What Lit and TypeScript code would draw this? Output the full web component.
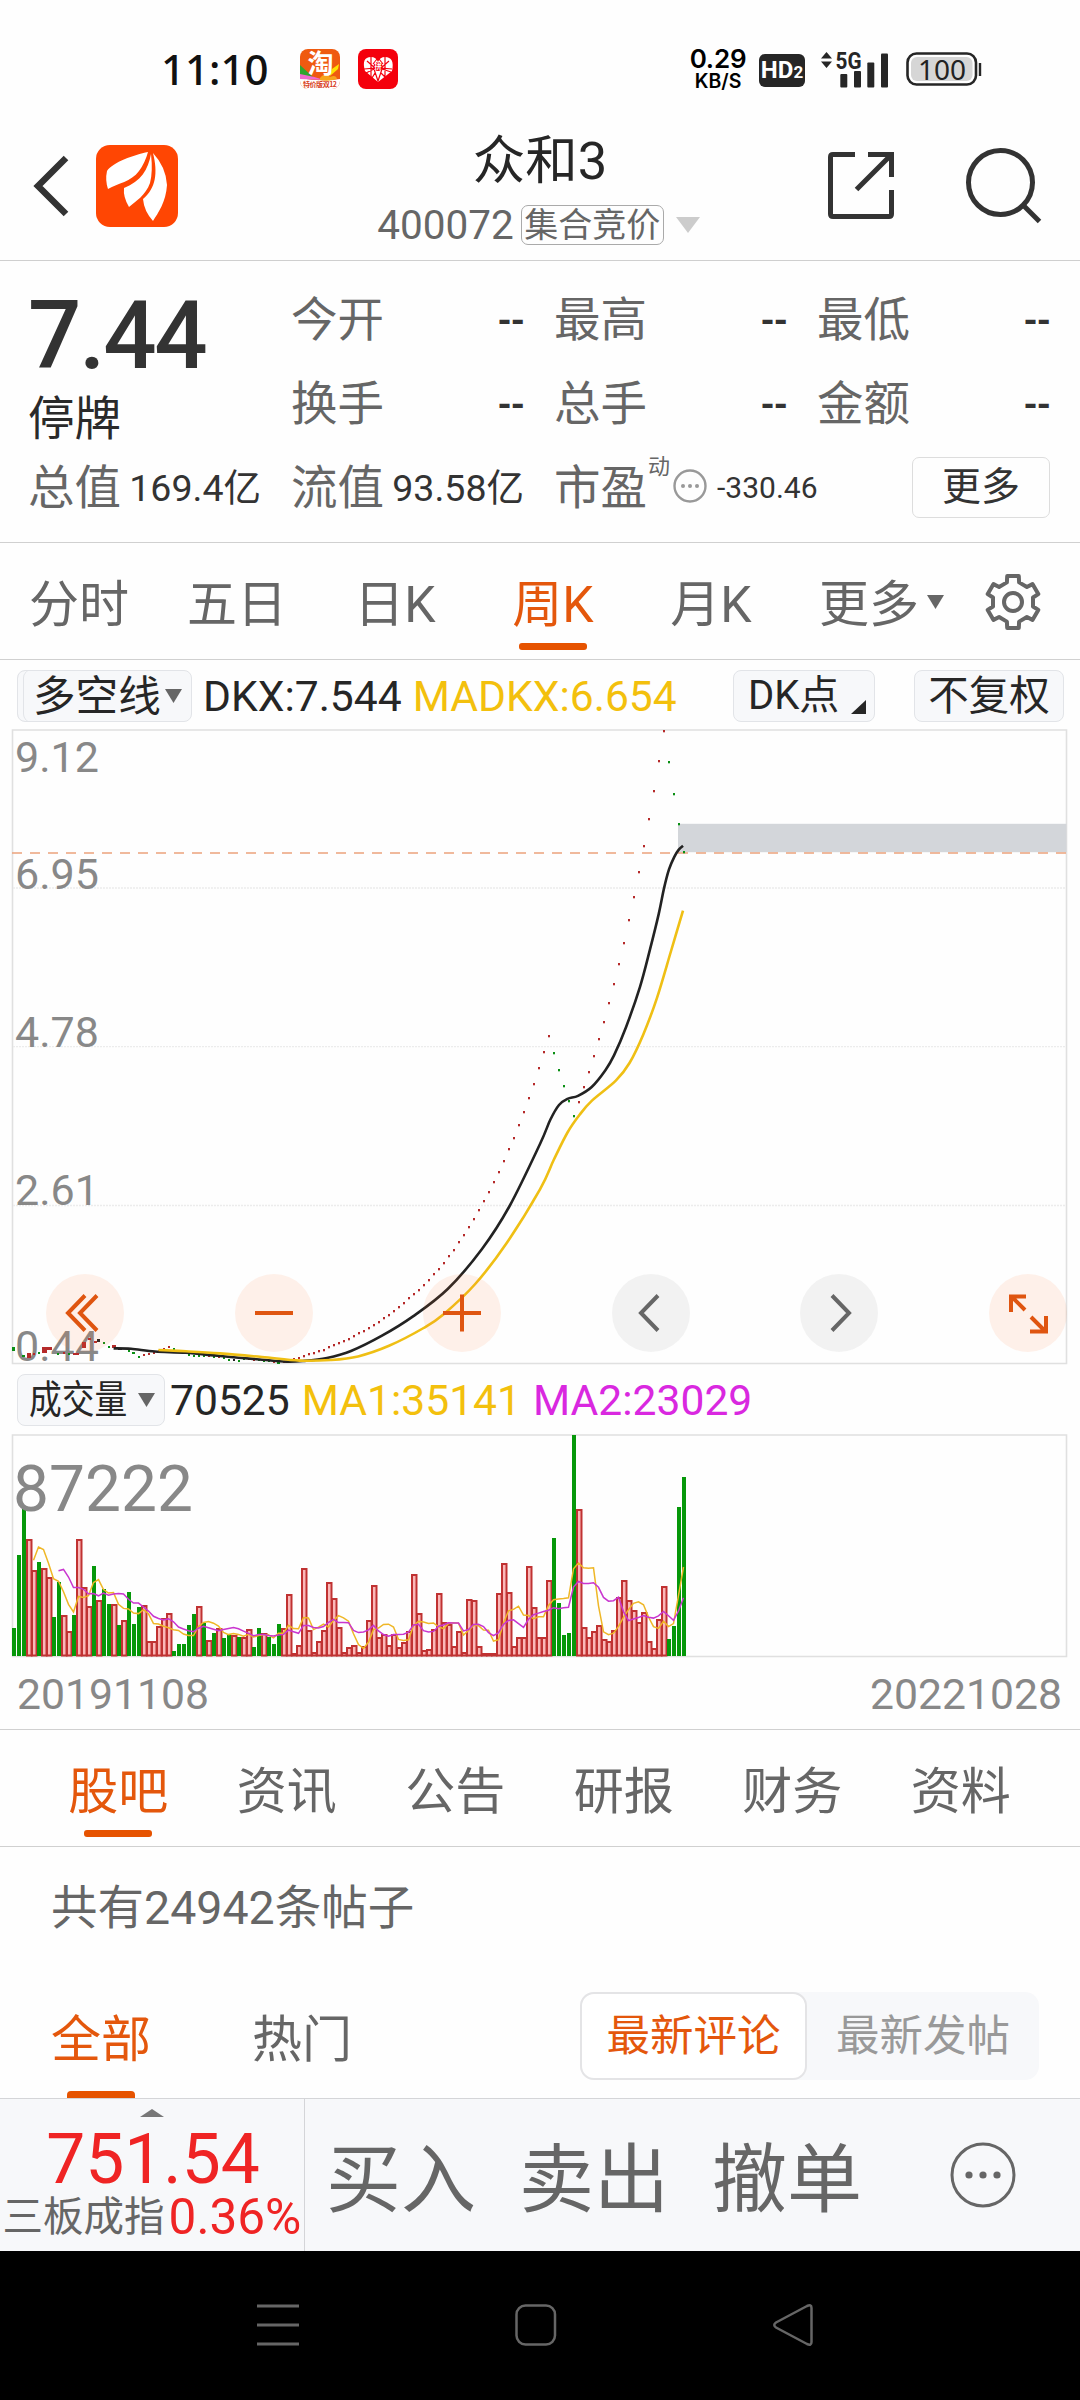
import { LitElement, html, svg, css } from "lit";
import { customElement } from "lit/decorators.js";

type Point = [number, number];

/* Weekly volume bars: "g" falling week, "r" rising week, height in px. */
const VOLUME = `g28 g101 g147 r117 r86 g94 r88 r79 g39 g74 r41 r25 g41 r117 r69 r50 g90 r56 g67 g52
r52 g31 r36 g64 g32 g49 r51 r15 r15 r30 r38 r43 g5 g12 g12 g31 g42 r50 g33 r16
g23 r28 g18 g22 r21 g19 r19 r27 g9 g28 r23 g19 g12 g32 r28 r62 r3 r11 r88 r26
r4 r15 r26 r74 r58 r29 r4 r9 r11 r4 r10 r36 r71 r19 r22 r11 r22 r9 r14 r25
r82 r43 r6 r7 r27 r63 r34 r32 r10 r25 r4 r57 r56 r10 r3 r3 r3 r63 r93 r64
r10 r19 r19 r90 r49 r19 r19 r76 g118 g53 g21 g23 g221 r147 r29 r19 r25 r31 r17 r15
r26 r59 r76 r56 r46 r34 r44 r15 r8 r37 r70 g17 g30 g149 g179`
  .split(/\s+/)
  .map((s) => ({ up: s[0] === "r", h: Number(s.slice(1)) }));

/* Early weekly candles with a visible body: x, y, width, height, colour. */
const EARLY: [number, number, number, number, string][] = [
  [12, 1347, 3, 4, "g"], [22, 1355, 3, 2, "g"], [27, 1353, 4, 5, "r"], [33, 1353, 2, 2, "r"],
  [38, 1352, 2, 2, "g"], [42, 1347, 5, 6, "r"], [47, 1347, 5, 3, "r"], [57, 1353, 2, 2, "g"],
  [63, 1352, 2, 2, "r"], [68, 1353, 2, 2, "g"], [73, 1353, 6, 2, "r"], [82, 1342, 4, 6, "r"],
  [88, 1338, 3, 2, "r"], [94, 1341, 3, 2, "r"], [97, 1339, 3, 3, "k"], [103, 1342, 2, 2, "g"],
  [108, 1346, 2, 2, "g"], [112, 1345, 4, 3, "r"], [118, 1348, 4, 2, "k"], [128, 1350, 2, 2, "g"],
  [132, 1352, 3, 2, "g"], [138, 1356, 2, 2, "g"], [143, 1354, 2, 2, "r"], [148, 1353, 2, 2, "r"],
  [153, 1352, 2, 2, "r"], [158, 1350, 2, 2, "r"], [163, 1348, 2, 2, "r"], [168, 1346, 2, 2, "r"],
  [173, 1348, 2, 2, "g"], [178, 1350, 2, 2, "g"], [183, 1352, 2, 2, "g"], [188, 1354, 2, 2, "g"],
  [193, 1355, 2, 2, "g"], [198, 1355, 2, 2, "g"], [203, 1355, 2, 2, "g"], [208, 1355, 2, 2, "r"],
  [213, 1356, 2, 2, "g"], [218, 1356, 2, 2, "r"], [223, 1357, 2, 2, "g"], [228, 1359, 2, 2, "g"],
  [233, 1359, 2, 2, "k"], [238, 1360, 2, 2, "g"], [243, 1358, 2, 2, "g"], [248, 1358, 2, 2, "r"],
  [253, 1359, 2, 2, "r"], [258, 1359, 2, 2, "g"], [263, 1360, 2, 2, "g"], [268, 1360, 2, 2, "g"],
  [273, 1361, 2, 2, "r"], [277, 1362, 3, 2, "g"], [283, 1361, 2, 2, "r"], [288, 1360, 2, 2, "r"],
];

/* One-price weeks from index 56 on, as the y of each dot. */
const DOTS = [
  1359, 1357.5, 1355.7, 1354.3, 1352.6, 1351, 1349.6, 1346.7, 1345, 1343, 1341, 1338.7, 1335.7, 1333,
  1330.7, 1327.8, 1324.8, 1322, 1318, 1314.7, 1311, 1306.7, 1303, 1298, 1293.7, 1289.9, 1284.8, 1279.8,
  1273.9, 1268.8, 1262.9, 1255.8, 1249.9, 1241.9, 1234.7, 1226.7, 1218.7, 1210, 1200.6, 1191.8, 1182,
  1171.6, 1160.7, 1148.9, 1138, 1124.9, 1111.8, 1098, 1083.6, 1067.6, 1051.6, 1035.7, 1053, 1069.8,
  1085.7, 1101, 1115.6, 1101.7, 1087, 1071.9, 1055.9, 1038.6, 1021.8, 1002.8, 983.9, 963.7, 942.6, 920,
  896.8, 872, 845.8, 819, 790.7, 760.8, 730.5, 761.7, 793.7, 823.5, 851.7,
];

const DKX: Point[] = [
  [113.6, 1348.4], [131, 1348.8], [155, 1351.5], [186, 1352.8], [220, 1356], [262, 1359.7], [286, 1361.6],
  [303, 1361], [327, 1358], [351, 1351], [382, 1335.7], [413, 1316.4], [447.7, 1289], [482, 1249],
  [509.6, 1206], [540, 1144], [550.3, 1119.8], [559, 1105], [567.5, 1098.8], [578, 1095.8], [591.7, 1087],
  [605.4, 1070.2], [614, 1055.4], [626, 1027.2], [640, 986.8], [650, 949.4], [658.8, 913.6], [664, 888.4],
  [669, 869.4], [674.3, 856.8], [678.8, 849.6], [683, 845.8],
];

const MADKX: Point[] = [
  [158.4, 1350], [186, 1351.3], [220, 1353.4], [262, 1357], [299.6, 1360.6], [330.6, 1360], [358, 1356.4],
  [389, 1345.8], [423.6, 1328], [444, 1313.9], [475.2, 1284], [506, 1244], [540, 1189.3], [553.8, 1159.8],
  [567.5, 1132.5], [579.6, 1114.8], [591.7, 1100.9], [615.8, 1080.7], [629.5, 1063], [643.3, 1034.4],
  [657, 997.8], [670.9, 951.5], [683, 910.7],
];

const COLORS: Record<string, string> = { g: "#0a8f14", r: "#b52a2a", k: "#222" };
const CHART_TOP = 725;
const VOL_BASE = 226;

function smooth(points: Point[], dy: number): string {
  let d = `M${points[0][0]} ${points[0][1] - dy}`;
  for (let i = 0; i < points.length - 1; i++) {
    const a = points[Math.max(0, i - 1)];
    const b = points[i];
    const c = points[i + 1];
    const e = points[Math.min(points.length - 1, i + 2)];
    d += `C${b[0] + (c[0] - a[0]) / 6} ${b[1] + (c[1] - a[1]) / 6 - dy} ${c[0] - (e[0] - b[0]) / 6} ${
      c[1] - (e[1] - b[1]) / 6 - dy
    } ${c[0]} ${c[1] - dy}`;
  }
  return d;
}

function average(n: number): string {
  const pts: string[] = [];
  for (let i = n - 1; i < VOLUME.length; i++) {
    let sum = 0;
    for (let k = 0; k < n; k++) sum += VOLUME[i - k].h;
    pts.push(`${13.5 + i * 5},${(VOL_BASE - sum / n).toFixed(1)}`);
  }
  return pts.join(" ");
}

@customElement("status-bar")
class StatusBar extends LitElement {
  static styles = css`
    :host { display: block; font-family: Inter, Roboto, "Noto Sans CJK SC", sans-serif; color: #111; }
    .bar { display: flex; align-items: center; height: 110px; padding: 28px 98px 0 161px; box-sizing: border-box; }
    .time { font: 500 42px/50px "Noto Sans", sans-serif; width: 139px; white-space: nowrap; }
    .app { width: 40px; height: 40px; margin-right: 18px; display: block; overflow: visible; }
    .fill { flex: 1; }
    .speed { width: 62px; display: flex; flex-direction: column; align-items: center; font-weight: 600; color: #000; }
    .rate { font-size: 26px; line-height: 24px; letter-spacing: -0.2px; }
    .unit { font-size: 19.5px; line-height: 20px; }
    .hd { width: 46px; height: 33px; margin: 3px 16px 0 10px; border-radius: 6px; background: #262626; color: #fff;
      display: flex; align-items: baseline; justify-content: center; font: 700 24px/33px Roboto, sans-serif; }
    .two { font-size: 17px; }
    .signal { width: 68px; height: 38px; margin-right: 16px; display: block; overflow: visible; }
    .battery { width: 77px; height: 36px; display: block; }
  `;
  render() {
    return html`<div class="bar">
      <span class="time">11:10</span>
      <svg class="app" viewBox="0 0 40 40">
        <defs><clipPath id="c"><rect width="40" height="40" rx="8" /></clipPath></defs>
        <g clip-path="url(#c)">
          <rect width="40" height="40" fill="#ef5a10" />
          <path d="M0 16L14 29L0 33z" fill="#2fa52f" />
          <path d="M0 29Q20 33 40 30V40H0z" fill="#fff" />
          <path d="M0 25Q12 27 24 31L0 30z" fill="#f06ad0" />
          <path d="M20 29Q26 22 30 28Q36 25 37 30Q28 33 20 31z" fill="#f7a51c" />
          <path d="M32 20L39 15L38 20L30 27z" fill="#ffe100" />
        </g>
        <text x="20.500" y="23.500" text-anchor="middle" font-size="26" font-weight="700" fill="#fff" font-family="Noto Sans CJK SC, sans-serif">淘</text>
        <text x="3" y="38" font-size="7" textLength="34" font-weight="700" fill="#d8401c" font-family="Noto Sans CJK SC, sans-serif">特价版双12</text>
      </svg>
      <svg class="app" viewBox="0 0 40 40">
        <rect width="40" height="40" rx="8" fill="#f4000c" />
        <path d="M20 33L7 22Q3 8 13 8Q18 8 20 13Q22 8 27 8Q37 8 34 22z" fill="#fff" />
        <path d="M9 12L17 19L6 20M31 12L23 19L34 20M13 8V28M27 8V28M8 24L16 20L20 32L24 20L33 23M17 24L14 29M23 24L27 28M19 10L15 15M21 10L25 15" stroke="#f4000c" stroke-width="1.2" fill="none" />
        <circle cx="20" cy="17.500" r="4.600" fill="#f4000c" />
        <text x="20" y="20.300" text-anchor="middle" font-size="7.500" font-weight="700" fill="#fff" font-family="Noto Sans CJK SC, sans-serif">拼</text>
      </svg>
      <span class="fill"></span>
      <span class="speed"><span class="rate">0.29</span><span class="unit">KB/S</span></span>
      <span class="hd">HD<span class="two">2</span></span>
      <svg class="signal" viewBox="822 48 68 38" fill="#262626">
        <path d="M827.500 50L833 56.500H822zM827.500 66L833 59.500H822z" />
        <text x="836.500" y="66.500" font-size="23" font-weight="700" textLength="26" lengthAdjust="spacingAndGlyphs" font-family="Roboto, sans-serif">5G</text>
        <rect x="841.300" y="72" width="7" height="13.500" rx="1" />
        <rect x="855" y="69" width="7" height="16.500" rx="1" />
        <rect x="868.300" y="60.500" width="7" height="25" rx="1" />
        <rect x="882" y="51.500" width="7" height="34" rx="1" />
      </svg>
      <svg class="battery" viewBox="905 50 77 36">
        <rect x="907.500" y="52.500" width="68.500" height="31" rx="9" fill="#fff" stroke="#262626" stroke-width="2.600" />
        <rect x="911" y="56" width="61.500" height="24" rx="6" fill="#d6d6d6" />
        <path d="M980 62V75" stroke="#262626" stroke-width="2.400" />
        <text x="942" y="78.500" text-anchor="middle" font-size="28" fill="#222" font-family="Noto Sans, sans-serif">100</text>
      </svg>
    </div>`;
  }
}

@customElement("price-chart")
class PriceChart extends LitElement {
  static styles = css`
    :host { display: block; position: relative; height: 645px; }
    .plot { display: block; width: 1080px; height: 645px; font-family: Roboto, sans-serif; }
    .tools { position: absolute; left: 46px; right: 13px; top: 549px; display: flex; justify-content: space-between; }
    .tool { width: 78px; height: 78px; border-radius: 50%; background: rgba(255, 115, 50, 0.1); }
    .muted { background: rgba(120, 120, 120, 0.09); }
    .glyph { display: block; width: 78px; height: 78px; fill: none; stroke: #df5510; stroke-width: 4; }
    .muted .glyph { stroke: #666; }
  `;
  render() {
    const y = (v: number) => v - CHART_TOP;
    const tool = (d: string, muted = false) =>
      html`<div class="tool ${muted ? "muted" : ""}"><svg class="glyph" viewBox="0 0 78 78"><path d=${d} /></svg></div>`;
    return html`
      <svg class="plot" viewBox="0 0 1080 645">
        <path d="M12.500 5V638.500H1066.500V5z" fill="none" stroke="#e0e0e0" stroke-width="1.600" />
        ${[888, 1046.6, 1205.5].map(
          (g) => svg`<path d="M13 ${y(g)}H1066" stroke="#ececec" stroke-width="1.400" stroke-dasharray="2 1" />`
        )}
        <rect x="678" y=${y(823.8)} width="388.500" height="28.400" fill="#d3d6da" />
        <path d="M12 ${y(852.9)}H1066" stroke="#eba27c" stroke-width="1.500" stroke-dasharray="10 8" />
        <g fill="#888" font-size="43">
          <text x="15" y=${y(772)}>9.12</text>
          <text x="15" y=${y(888.5)}>6.95</text>
          <text x="15" y=${y(1047)}>4.78</text>
          <text x="15" y=${y(1205)}>2.61</text>
          <text x="15" y=${y(1360.5)}>0.44</text>
        </g>
        ${EARLY.map(([x, t, w, h, c]) => svg`<rect x=${x} y=${y(t)} width=${w} height=${h} fill=${COLORS[c]} />`)}
        ${DOTS.map((v, k) => {
          const i = k + 56;
          const down = (i >= 108 && i <= 112) || i >= 131;
          return svg`<rect x=${13 + i * 5} y=${Math.round(y(v)) - 1} width="2" height="2.300" fill=${COLORS[down ? "g" : "r"]} />`;
        })}
        <path d=${smooth(DKX, CHART_TOP)} fill="none" stroke="#222" stroke-width="2.600" />
        <path d=${smooth(MADKX, CHART_TOP)} fill="none" stroke="#efbf14" stroke-width="2.600" />
      </svg>
      <div class="tools">
        ${tool("M39 21.500L22 39L39 56.500M51 21.500L34 39L51 56.500")}
        ${tool("M20 39H58")}
        ${tool("M20 39H58M39 20.500V57.500")}
        ${tool("M46 21.500L29 39L46 56.500", true)}
        ${tool("M32 21.500L49 39L32 56.500", true)}
        ${tool("M22 38V22.500H37M23 23L36 36M57 42V57.500H41M56 57L42 43")}
      </div>
    `;
  }
}

@customElement("volume-chart")
class VolumeChart extends LitElement {
  static styles = css`
    :host { display: block; }
    .plot { display: block; width: 1080px; height: 232px; font-family: Roboto, sans-serif; }
  `;
  render() {
    return html`<svg class="plot" viewBox="0 0 1080 232">
      <path d="M12.500 5V226.500H1066.500V5z" fill="none" stroke="#e0e0e0" stroke-width="1.600" />
      ${VOLUME.map(({ up, h }, i) =>
        up
          ? svg`<rect x=${12 + i * 5} y=${VOL_BASE - h + 1} width="4.500" height=${Math.max(1, h - 1.5)} fill="#fbb8b8" stroke="#c03232" stroke-width="2" />`
          : svg`<rect x=${12 + i * 5} y=${VOL_BASE - h} width="4" height=${h} fill="#06980a" />`
      )}
      <text x="13" y="80.500" font-size="64" fill="#888">87222</text>
      <polyline points=${average(5)} fill="none" stroke="#efb727" stroke-width="1.500" />
      <polyline points=${average(10)} fill="none" stroke="#c936cf" stroke-width="1.500" />
    </svg>`;
  }
}

@customElement("app-root")
class AppRoot extends LitElement {
  static styles = css`
    :host { display: block; width: 1080px; height: 2400px; overflow: hidden; background: #fefefe; color: #666;
      font-family: Roboto, "Noto Sans CJK SC", sans-serif; white-space: nowrap; }
    * { box-sizing: border-box; }
    svg { display: block; flex: none; }

    .header { display: grid; grid-template-columns: 300px 480px 300px; height: 151px; border-bottom: 1px solid #cfcfcf; }
    .side { display: flex; align-items: center; padding-top: 1px; }
    .left { padding-left: 32px; gap: 26px; }
    .right { justify-content: flex-end; padding-right: 38px; gap: 70px; }
    .titles { display: flex; flex-direction: column; align-items: center; padding-top: 25px; }
    .title { font-size: 52.500px; line-height: 52px; color: #262626; }
    .sub { display: flex; align-items: center; margin: 18px 3px 0 0; height: 40px; font-size: 40.500px; line-height: 40px; }
    .badge { border: 1.5px solid #aaa; border-radius: 7px; margin: 0 12px 0 7px; height: 40px; width: 143px;
      font-size: 34px; line-height: 39px; text-align: center; }

    .quote { height: 282px; padding: 17px 28px 0 28px; border-bottom: 1px solid #d0d0d0; display: grid;
      grid-template-columns: repeat(4, 233px); column-gap: 30px; grid-template-rows: 84px 84px 84px; font-size: 46.500px; }
    .last { grid-row: 1 / span 2; display: flex; flex-direction: column; color: #333; }
    .price { font-size: 94px; line-height: 94px; font-weight: 500; margin-top: 11px; letter-spacing: -2.2px; }
    .state { line-height: 56px; margin-top: 8px; color: #2a2a2a; }
    .cell { display: flex; align-items: center; justify-content: space-between; line-height: 84px; }
    .dash { color: #333; font-weight: 500; font-size: 46px; transform: scaleX(0.84); transform-origin: 100% 50%; }
    .val { color: #333; font-size: 37.500px; }
    .pe { grid-column: span 2; display: flex; align-items: center; line-height: 84px; }
    .sup { font-size: 22px; align-self: flex-start; line-height: 30px; margin: 6px 3px 0 1px; }
    .ratio { font-size: 30px; color: #333; margin-left: 10px; }
    .more { margin-left: auto; width: 138px; height: 61px; border: 1.5px solid #ddd; border-radius: 7px;
      color: #333; font-size: 39px; line-height: 58px; text-align: center; margin-top: -2px; }
    .pe .dots { margin-top: -4px; }

    .periods { display: flex; height: 117px; border-bottom: 1px solid #d0d0d0; font-size: 50px; color: #666; }
    .period { width: 158px; display: flex; flex-direction: column; align-items: center; padding-top: 27px; line-height: 70px; }
    .on { color: #e4570c; }
    .mark { width: 68px; height: 7px; border-radius: 3px; background: #e65300; }
    .period .mark { margin-top: 3px; margin-right: 1px; }
    .others { display: flex; align-items: center; padding: 0 0 0 29px; line-height: 110px; height: 118px; }
    .others .word { margin-top: 5px; }
    .others .tri { margin: 0 40px 0 8px; }

    .legend { display: flex; align-items: center; height: 65px; padding: 6px 16px 0 17px; font-size: 42.600px; color: #262626; }
    .chip { height: 52px; border: 1.5px solid #e2e4e8; border-radius: 8px; background: #f7f8fa; display: flex; align-items: center; color: #262626; line-height: 50px; }
    .line { width: 175px; padding-left: 15px; margin-right: 11px; box-shadow: inset 6px 0 0 -1px #f7f8fa, inset 7px 0 0 -1px #e2e4e8; }
    .line .tri { margin-left: 4px; }
    .yellow { color: #f3c00d; }
    .violet { color: #d928e0; }
    .dk { width: 142px; padding-left: 14px; font-size: 40px; margin-left: auto; margin-right: 39px; }
    .corner { margin: 22px 0 0 12px; }
    .adj { width: 150px; justify-content: center; font-size: 40.500px; }
    .gap { margin-left: 11px; }

    .vol { height: 60px; padding-top: 0; }
    .vchip { width: 148px; padding-left: 11px; margin-right: 5px; font-size: 39px; }
    .narrow { display: block; width: 99px; transform: scaleX(0.84); transform-origin: 0 50%; }
    .vchip .tri { margin-left: 10px; }
    .ma { margin-left: 12px; }
    .dates { display: flex; justify-content: space-between; padding: 0 18px 0 17px; height: 68px; line-height: 65px; font-size: 42.700px; color: #888; border-bottom: 1px solid #d0d0d0; }

    .sections { display: flex; height: 117px; border-bottom: 1px solid #d0d0d0; padding-left: 34px; font-size: 50px; }
    .section { width: 168.500px; display: flex; flex-direction: column; align-items: center; padding-top: 27px; line-height: 70px; }
    .section .mark { margin-top: 3px; }
    .count { font-size: 46.500px; line-height: 60px; padding: 31px 0 0 51px; height: 143px; }
    .filters { display: flex; height: 108px; padding-left: 52px; font-size: 50px; }
    .filter { width: 98px; margin-right: 103px; line-height: 100px; display: flex; flex-direction: column; align-items: center; }
    .filter .mark { margin-top: 1px; margin-right: 1px; border-radius: 4px 4px 0 0; }
    .seg { margin-left: 126px; margin-top: 2px; width: 459px; height: 88px; border-radius: 14px; background: #f7f8fa; display: flex; font-size: 43.500px; line-height: 89px; color: #999; text-align: center; }
    .pick { width: 227px; border: 2px solid #e4e4e6; border-radius: 14px; background: #fff; line-height: 86px; }
    .rest { flex: 1; }

    .trade { display: flex; height: 153px; background: #f7f8fa; border-top: 1px solid #d4d5d8; }
    .index { width: 305px; border-right: 1px solid #d4d5d8; display: flex; flex-direction: column; align-items: center; padding-top: 10px; color: #ef2424; }
    .points { font-size: 69.500px; line-height: 70px; margin: 8px 0 0 2px; }
    .chg { display: flex; align-items: center; font-size: 49.500px; line-height: 50px; margin-top: -3px; }
    .iname { font-size: 40.500px; color: #666; margin-right: 4px; }
    .acts { display: flex; flex: 1; padding-left: 21px; font-size: 75px; line-height: 160px; align-items: center; }
    .act { width: 193px; margin-top: 9px; }
    .dial { margin-left: 45px; }
    .nav { height: 149px; background: #000; display: flex; align-items: center; padding: 0 0 0 257px; }
    .nav svg { margin-right: 216px; margin-top: -1px; }
  `;

  private tri(w: number, h: number, fill: string) {
    return html`<svg class="tri" width=${w} height=${h} viewBox="0 0 10 10" preserveAspectRatio="none"><path d="M0 0H10L5 10z" fill=${fill} /></svg>`;
  }

  private cell(label: string) {
    return html`<div class="cell"><span>${label}</span><span class="dash">--</span></div>`;
  }

  private gear() {
    const pts: string[] = [];
    for (let i = 0; i < 6; i++) {
      const a = (i * Math.PI) / 3 - Math.PI / 2;
      for (const [r, o] of [[20.5, -0.3], [26.5, -0.22], [26.5, 0.22], [20.5, 0.3]]) {
        pts.push(`${(29 + r * Math.cos(a + o)).toFixed(1)},${(29 + r * Math.sin(a + o)).toFixed(1)}`);
      }
    }
    return html`<svg width="58" height="58" viewBox="0 0 58 58" fill="none" stroke="#666" stroke-width="4" stroke-linejoin="round">
      <polygon points=${pts.join(" ")} /><circle cx="29" cy="29" r="9" />
    </svg>`;
  }

  render() {
    return html`
      <status-bar></status-bar>
      <div class="header">
        <div class="side left">
          <svg width="38" height="62" viewBox="0 0 38 62"><path d="M34 3L6 31L34 59" fill="none" stroke="#333" stroke-width="6.500" /></svg>
          <svg width="82" height="82" viewBox="0 0 82 82">
            <rect width="82" height="82" rx="14" fill="#ff4603" />
            <g fill="#fff">
              <path d="M52 7C38 10 17 17 11 26Q9 35 12 44C22 38 35 37 43 26Q49 18 52 7z" />
              <path d="M55 9C52 25 45 36 28 43Q27 52 33 62C39 57 50 50 54 38Q57 27 55 9z" />
              <path d="M57 8C62 28 60 43 47 54Q48 66 57 76C62 68 70 57 71 40Q70 22 57 8z" />
            </g>
          </svg>
        </div>
        <div class="titles">
          <div class="title">众和3</div>
          <div class="sub"><span>400072</span><span class="badge">集合竞价</span>${this.tri(24, 16, "#ccc")}</div>
        </div>
        <div class="side right">
          <svg width="67" height="67" viewBox="0 0 67 67" fill="none" stroke="#333" stroke-width="5">
            <path d="M27 2.500H5Q2.500 2.500 2.500 5V62Q2.500 64.500 5 64.500H61Q63.500 64.500 63.500 62V38M40 2.500H63.500V25M63 3L28.500 37.500" />
          </svg>
          <svg width="77" height="77" viewBox="0 0 77 77" fill="none" stroke="#333" stroke-width="5">
            <circle cx="35.500" cy="35.500" r="32" /><path d="M58 58L74.500 74.500" />
          </svg>
        </div>
      </div>

      <div class="quote">
        <div class="last"><span class="price">7.44</span><span class="state">停牌</span></div>
        ${["今开", "最高", "最低", "换手", "总手", "金额"].map((l) => this.cell(l))}
        <div class="cell"><span>总值</span><span class="val">169.4亿</span></div>
        <div class="cell"><span>流值</span><span class="val">93.58亿</span></div>
        <div class="pe">
          <span>市盈</span><span class="sup">动</span>
          <svg class="dots" width="34" height="34" viewBox="0 0 34 34"><circle cx="17" cy="17" r="15.500" fill="none" stroke="#999" stroke-width="2.400" /><g fill="#999"><circle cx="10" cy="17" r="2" /><circle cx="17" cy="17" r="2" /><circle cx="24" cy="17" r="2" /></g></svg>
          <span class="ratio">-330.46</span>
          <span class="more">更多</span>
        </div>
      </div>

      <div class="periods">
        ${["分时", "五日", "日K", "周K", "月K"].map(
          (p, i) => html`<div class="period ${i === 3 ? "on" : ""}"><span>${p}</span>${i === 3 ? html`<span class="mark"></span>` : ""}</div>`
        )}
        <div class="others"><span class="word">更多</span>${this.tri(17, 14, "#666")}${this.gear()}</div>
      </div>

      <div class="legend">
        <span class="chip line">多空线${this.tri(17, 14, "#666")}</span>
        <span>DKX:7.544</span><span class="yellow gap">MADKX:6.654</span>
        <span class="chip dk">DK点<svg class="corner" width="15" height="14" viewBox="0 0 15 14"><path d="M15 0V14H0z" fill="#262626" /></svg></span>
        <span class="chip adj">不复权</span>
      </div>
      <price-chart></price-chart>
      <div class="legend vol">
        <span class="chip vchip"><span class="narrow">成交量</span>${this.tri(17, 14, "#666")}</span>
        <span>70525</span><span class="yellow ma">MA1:35141</span><span class="violet ma">MA2:23029</span>
      </div>
      <volume-chart></volume-chart>
      <div class="dates"><span>20191108</span><span>20221028</span></div>

      <div class="sections">
        ${["股吧", "资讯", "公告", "研报", "财务", "资料"].map(
          (s, i) => html`<div class="section ${i === 0 ? "on" : ""}"><span>${s}</span>${i === 0 ? html`<span class="mark"></span>` : ""}</div>`
        )}
      </div>
      <div class="count">共有24942条帖子</div>
      <div class="filters">
        <div class="filter on"><span>全部</span><span class="mark"></span></div>
        <div class="filter"><span>热门</span></div>
        <div class="seg"><span class="pick on">最新评论</span><span class="rest">最新发帖</span></div>
      </div>

      <div class="trade">
        <div class="index">
          <svg width="24" height="8" viewBox="0 0 24 8"><path d="M0 8L12 0L24 8z" fill="#777" /></svg>
          <span class="points">751.54</span>
          <span class="chg"><span class="iname">三板成指</span>0.36%</span>
        </div>
        <div class="acts">
          <span class="act">买入</span><span class="act">卖出</span><span class="act">撤单</span>
          <svg class="dial" width="66" height="66" viewBox="0 0 66 66"><circle cx="33" cy="33" r="31" fill="none" stroke="#666" stroke-width="3" /><g fill="#666"><circle cx="19" cy="33" r="3.600" /><circle cx="33" cy="33" r="3.600" /><circle cx="47" cy="33" r="3.600" /></g></svg>
        </div>
      </div>
      <div class="nav">
        <svg width="42" height="42" viewBox="0 0 42 42" stroke="#666" stroke-width="3"><path d="M0 2H42M0 21H42M0 40H42" /></svg>
        <svg width="42" height="42" viewBox="0 0 42 42" fill="none" stroke="#666" stroke-width="2.500"><rect x="1.500" y="1.500" width="38.500" height="39" rx="9" /></svg>
        <svg width="42" height="42" viewBox="0 0 42 42" fill="none" stroke="#666" stroke-width="2.500"><path d="M3 18.500L34 2Q38.500 0 38.500 4V38Q38.500 42 34 40L3 23.500Q-0.500 21 3 18.500z" /></svg>
      </div>
    `;
  }
}
